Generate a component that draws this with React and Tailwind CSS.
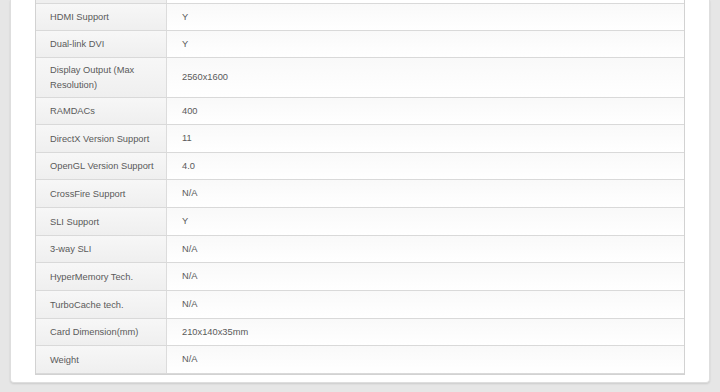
import React from "react";

// spec rows: [label, value, row height in px incl. bottom border]
const specs = [
  ["HDMI Support", "Y", 27],
  ["Dual-link DVI", "Y", 27],
  ["Display Output (Max Resolution)", "2560x1600", 40],
  ["RAMDACs", "400", 27],
  ["DirectX Version Support", "11", 28],
  ["OpenGL Version Support", "4.0", 27],
  ["CrossFire Support", "N/A", 28],
  ["SLI Support", "Y", 28],
  ["3-way SLI", "N/A", 27],
  ["HyperMemory Tech.", "N/A", 28],
  ["TurboCache tech.", "N/A", 28],
  ["Card Dimension(mm)", "210x140x35mm", 27],
  ["Weight", "N/A", 28],
];

function SpecRow({ label, value, height }) {
  return (
    <div className="flex border-b border-[#d9d9d9]" style={{ height }}>
      <div className="w-[131px] shrink-0 flex items-center pt-px pl-[14px] pr-[6px] border-r border-[#dcdcdc] bg-gradient-to-b from-[#f7f7f7] to-[#efefef] leading-[15px]">
        {label}
      </div>
      <div className="flex-1 flex items-center pt-px pl-[15px] bg-gradient-to-b from-[#f9f9f9] to-white">
        {value}
      </div>
    </div>
  );
}

export default function App() {
  return (
    <div className="h-[392px] overflow-hidden bg-[#e6e6e6] font-['Liberation_Sans',Arial,sans-serif] text-[9.3px] text-[#5a5a5a]">
      <div className="ml-[10px] w-[700px] h-[383px] bg-white border-x border-b border-[#dedede] rounded-b-[4px] shadow-[0_1px_2px_rgba(0,0,0,0.12)] pl-[24px]">
        <div className="w-[650px] border-x border-b border-[#d2d2d2]">
          {/* tail of the row scrolled above */}
          <div className="flex h-[4px] border-b border-[#d9d9d9]">
            <div className="w-[131px] shrink-0 border-r border-[#dcdcdc] bg-[#efefef]" />
            <div className="flex-1 bg-white" />
          </div>
          {specs.map(([label, value, h]) => (
            <SpecRow key={label} label={label} value={value} height={h} />
          ))}
        </div>
      </div>
    </div>
  );
}
